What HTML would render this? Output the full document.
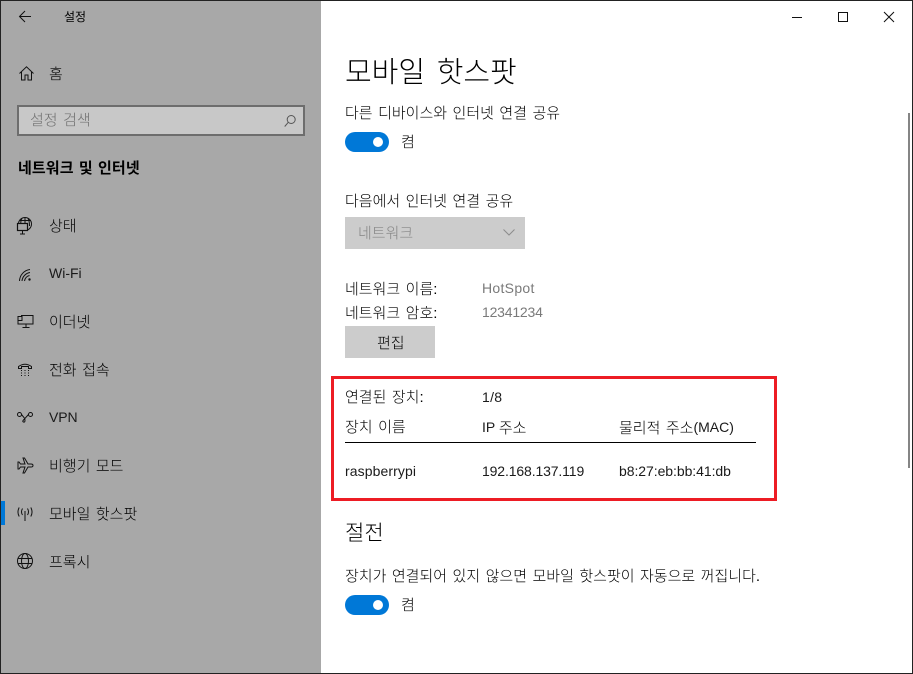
<!DOCTYPE html>
<html lang="ko"><head><meta charset="utf-8"><title>설정</title>
<style>
html,body{margin:0;padding:0;background:#fff}
body{position:relative;width:913px;height:674px;overflow:hidden;font-family:"Liberation Sans","Noto Sans CJK KR","NanumGothic",sans-serif;font-size:14px;color:#1a1a1a}
.t{position:absolute;white-space:nowrap;line-height:20px;height:20px}
.k{font-size:15px;word-spacing:1.3px;font-weight:300;color:#000}
.t.k{margin-top:1px}
span.k{position:relative;top:1px}
.g{color:#7a7a7a}
svg{position:absolute;overflow:visible;fill:none;stroke:#111;stroke-width:1}
#side{position:absolute;left:0;top:0;width:321px;height:674px;background:#a8a8a8}
.f{position:absolute;background:#222}
.tog{position:absolute;width:44px;height:20px;border-radius:10px;background:#0078d7}
.tog i{position:absolute;left:28px;top:5px;width:10px;height:10px;border-radius:50%;background:#fff}
</style></head><body>
<div id="side"></div>
<svg style="left:19px;top:10px" width="16" height="14" viewBox="0 0 16 14"><path d="M0.5 6.5H12M6 1L0.5 6.5L6 12"/></svg>
<div class="t" style="left:64px;top:7px;font-size:12px;font-weight:400;color:#000">설정</div>
<svg style="left:19px;top:66px" width="15" height="15" viewBox="0 0 15 15"><path d="M0.5 7.5L7.5 0.8L14.5 7.5M2.5 6V14H6V9H9V14H12.5V6"/></svg>
<div class="t k" style="left:49px;top:64px">홈</div>
<div style="position:absolute;left:17px;top:105px;width:284px;height:27px;border:2px solid #6d6d6d;background:#c8c8c8"></div>
<div class="t k" style="left:30px;top:110px;color:#6f6f6f">설정 검색</div>
<svg style="left:284px;top:115px;stroke:#555" width="12" height="12" viewBox="0 0 12 12"><circle cx="7.2" cy="4.5" r="4"/><path d="M4.3 7.3L.7 11.5"/></svg>
<div class="t" style="left:18px;top:159px;font-size:15px;font-weight:bold;letter-spacing:.1px;word-spacing:1px;color:#000">네트워크 및 인터넷</div>

<svg style="left:17px;top:217px" width="16" height="18" viewBox="0 0 16 18"><circle cx="8" cy="7" r="6.5"/><path d="M8 .5V7M3 3.5H14M11 1.5Q12.5 4 12.5 9"/><path d="M5 1.5Q3.8 3 3.8 6"/><rect x="0.5" y="6.5" width="10" height="7" fill="#a8a8a8" stroke-width="1.2"/><path d="M5.5 13.5V17M3 17H8"/></svg>
<div class="t k" style="left:49px;top:216px">상태</div>
<svg style="left:19px;top:268px" width="13" height="14" viewBox="0 0 13 14"><circle cx="10.5" cy="11.5" r="1.2" fill="#111" stroke="none"/><path d="M0.5 13A12 12 0 0 1 11 1.5M3 13A9.5 9.5 0 0 1 11 4.5M5.5 13A6.5 6.5 0 0 1 10.5 7.5"/></svg>
<div class="t" style="left:49px;top:263px">Wi-Fi</div>
<svg style="left:17px;top:315px" width="16" height="13" viewBox="0 0 16 13"><path d="M4 .5H16V9H1V6M9 9V12.5M5.5 12.5H12.5"/><rect x="1" y="1.5" width="4" height="4"/></svg>
<div class="t k" style="left:49px;top:312px">이더넷</div>
<svg style="left:17px;top:363px" width="16" height="13" viewBox="0 0 16 13"><path d="M1.5 5.5V3.5Q8 -1 14.5 3.5V5.5H11.5V3.5H4.5V5.5Z"/><path d="M4 7.5h1M7.5 7.5h1M11 7.5h1M4 10h1M7.5 10h1M11 10h1M4 12.5h1M7.5 12.5h1M11 12.5h1"/></svg>
<div class="t k" style="left:49px;top:360px">전화 접속</div>
<svg style="left:17px;top:412px" width="16" height="11" viewBox="0 0 16 11"><path d="M4.5 2.5L7 5.5Q8 7 8 8.5M11.5 2.5L8.5 5.8Q7.5 7 6.5 8M8 8.5Q8 10.5 6.5 10Q5 9.5 6.5 8"/><circle cx="2.5" cy="2.5" r="2"/><circle cx="13.5" cy="2.5" r="2"/></svg>
<div class="t" style="left:49px;top:407px;letter-spacing:-.1px">VPN</div>
<svg style="left:17px;top:457px" width="17" height="17" viewBox="0 0 17 17"><path d="M16 8.5Q16 7 14 7H11L7.5 1H6L8 7H3.5L2 5H1V8.5V12H2L3.5 10H8L6 16H7.5L11 10H14Q16 10 16 8.5Z"/></svg>
<div class="t k" style="left:49px;top:456px">비행기 모드</div>
<div style="position:absolute;left:1px;top:501px;width:4px;height:24px;background:#0078d7"></div>
<svg style="left:17px;top:507px" width="16" height="14" viewBox="0 0 16 14"><path d="M8 4V14M5.5 1.5Q3.5 5 5.5 8M10.5 1.5Q12.5 5 10.5 8M2.2 .5Q-.3 5 2.2 9.5M13.8 .5Q16.3 5 13.8 9.5"/></svg>
<div class="t k" style="left:49px;top:504px">모바일 핫스팟</div>
<svg style="left:17px;top:553px" width="16" height="16" viewBox="0 0 16 16"><circle cx="8" cy="8" r="7.5"/><ellipse cx="8" cy="8" rx="3.5" ry="7.5"/><path d="M1 5.5H15M1 10.5H15"/></svg>
<div class="t k" style="left:49px;top:552px">프록시</div>

<svg style="left:792px;top:17px" width="10" height="1"><path d="M0 .5H10"/></svg>
<svg style="left:838px;top:12px" width="10" height="10"><rect x=".5" y=".5" width="9" height="9"/></svg>
<svg style="left:884px;top:12px" width="10" height="10"><path d="M0 0L10 10M10 0L0 10"/></svg>
<div style="position:absolute;left:908px;top:113px;width:2px;height:355px;background:#858585"></div>

<div class="t" style="left:345px;top:53px;height:40px;line-height:40px;font-size:29px;font-weight:300;word-spacing:3.6px;color:#000">모바일 핫스팟</div>
<div class="t k" style="left:345px;top:103px">다른 디바이스와 인터넷 연결 공유</div>
<div class="tog" style="left:345px;top:132px"><i></i></div>
<div class="t k" style="left:401px;top:132px">켬</div>
<div class="t k" style="left:345px;top:191px">다음에서 인터넷 연결 공유</div>
<div style="position:absolute;left:345px;top:217px;width:180px;height:32px;background:#cccccc"></div>
<div class="t k" style="left:358px;top:223px;color:#858585">네트워크</div>
<svg style="left:503px;top:229px;stroke:#8c8c8c" width="12" height="7"><path d="M.5 .5L6 6L11.5 .5"/></svg>
<div class="t k" style="left:345px;top:279px">네트워크 이름:</div>
<div class="t g" style="left:482px;top:278px;letter-spacing:.3px">HotSpot</div>
<div class="t k" style="left:345px;top:303px">네트워크 암호:</div>
<div class="t g" style="left:482px;top:302px;letter-spacing:-.2px">12341234</div>
<div style="position:absolute;left:345px;top:326px;width:90px;height:32px;background:#cccccc"></div>
<div class="t k" style="left:377px;top:333px">편집</div>

<div style="position:absolute;left:331px;top:376px;width:440px;height:119px;border:3px solid #ed1c24"></div>
<div class="t k" style="left:345px;top:387px">연결된 장치:</div>
<div class="t" style="left:482px;top:387px;letter-spacing:.3px">1/8</div>
<div class="t k" style="left:345px;top:417px">장치 이름</div>
<div class="t" style="left:482px;top:417px">IP <span class="k">주소</span></div>
<div class="t" style="left:619px;top:417px"><span class="k">물리적 주소</span>(MAC)</div>
<div style="position:absolute;left:345px;top:442px;width:411px;height:1px;background:#000"></div>
<div class="t" style="left:345px;top:461px;letter-spacing:.1px">raspberrypi</div>
<div class="t" style="left:482px;top:461px;letter-spacing:-.13px">192.168.137.119</div>
<div class="t" style="left:619px;top:461px;letter-spacing:-.06px">b8:27:eb:bb:41:db</div>

<div class="t" style="left:345px;top:520px;height:28px;line-height:28px;font-size:21px;font-weight:300;color:#000">절전</div>
<div class="t k" style="left:345px;top:566px">장치가 연결되어 있지 않으면 모바일 핫스팟이 자동으로 꺼집니다.</div>
<div class="tog" style="left:345px;top:595px"><i></i></div>
<div class="t k" style="left:401px;top:595px">켬</div>

<div class="f" style="left:0;top:0;width:913px;height:1px"></div>
<div class="f" style="left:0;top:673px;width:913px;height:1px"></div>
<div class="f" style="left:0;top:0;width:1px;height:674px"></div>
<div class="f" style="left:912px;top:0;width:1px;height:674px"></div>
</body></html>
